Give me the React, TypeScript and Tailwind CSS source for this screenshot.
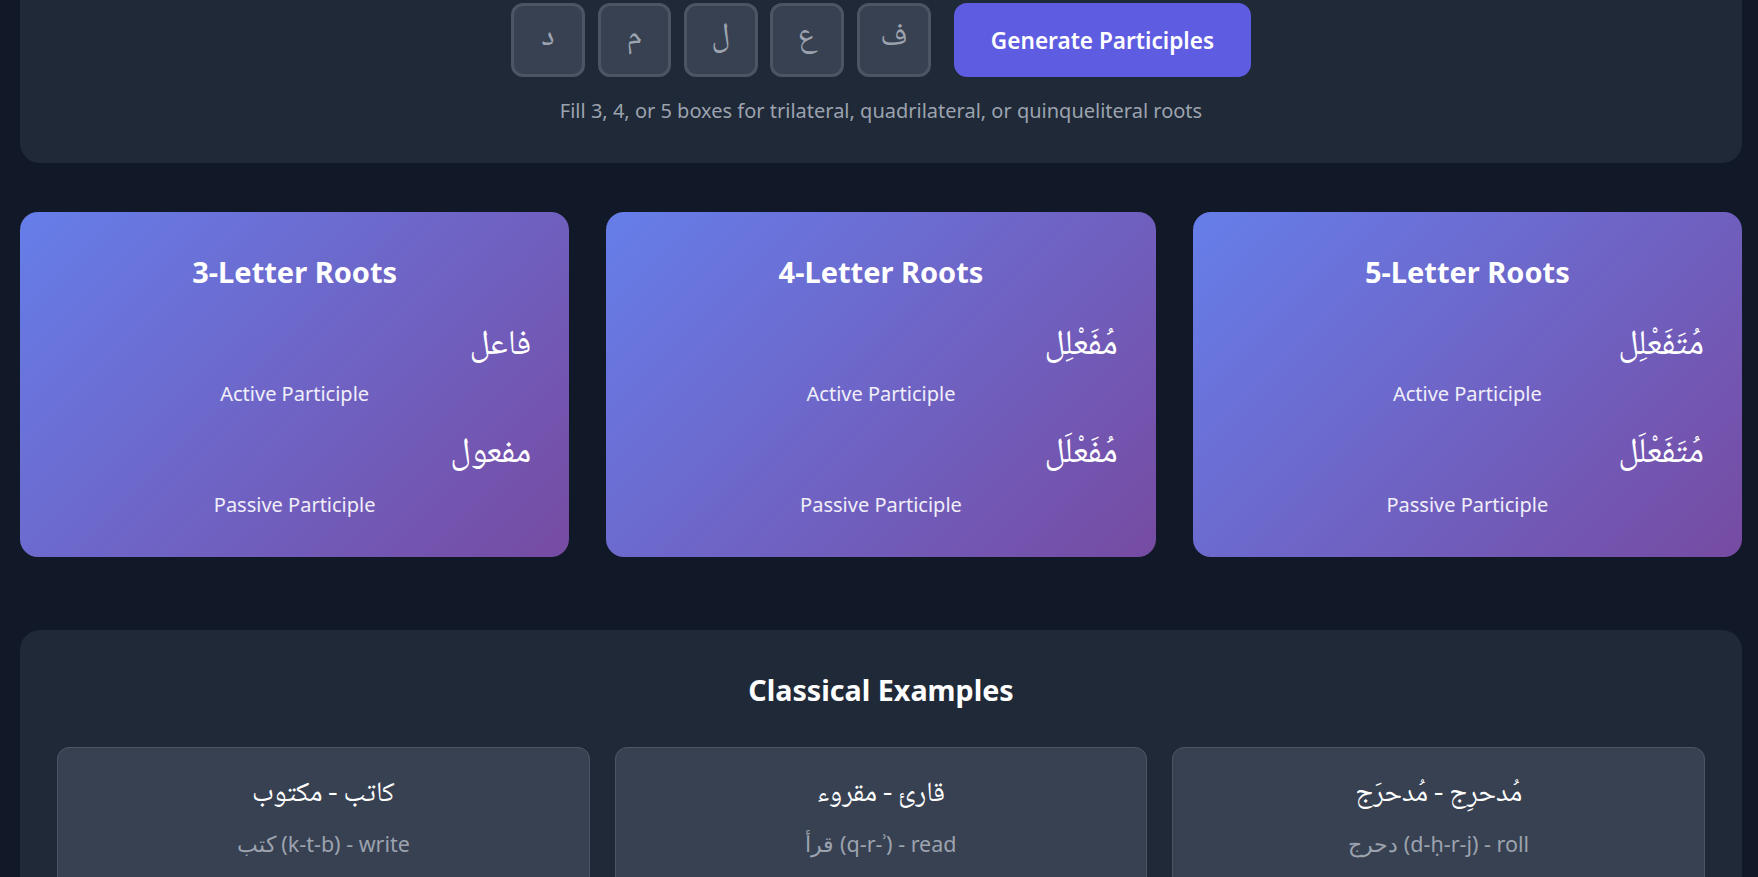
const boxes = ["د", "م", "ل", "ع", "ف"];

const rootCards = [
  { title: "3-Letter Roots", active: "فاعل", passive: "مفعول" },
  { title: "4-Letter Roots", active: "مُفَعْلِل", passive: "مُفَعْلَل" },
  { title: "5-Letter Roots", active: "مُتَفَعْلِل", passive: "مُتَفَعْلَل" },
];

const examples = [
  { arabic: "كاتب - مكتوب", root: "كتب (k-t-b) - write" },
  { arabic: "قارئ - مقروء", root: "قرأ (q-r-ʾ) - read" },
  { arabic: "مُدحرِج - مُدحرَج", root: "دحرج (d-ḥ-r-j) - roll" },
];

const arabicFont = "font-['Noto_Naskh_Arabic','Amiri','Scheherazade_New','Liberation_Serif',serif]";

export default function App() {
  return (
    <div className="h-[877px] overflow-hidden bg-[#111827] pl-5 pr-4 font-['Noto_Sans',sans-serif]">
      <section className="flex h-[163px] flex-col items-center rounded-b-[20px] bg-[#1f2937] pt-[3px]">
        <div className="flex items-center">
          <div className="flex gap-[12.9px]">
            {boxes.map((b) => (
              <div
                key={b}
                className={`flex h-[74px] w-[73.6px] items-center justify-center rounded-[12px] border-[3px] border-[#4b5563] bg-[#374151] pb-[4px] text-[32px] text-[#9ca3af] ${arabicFont}`}
              >
                {b}
              </div>
            ))}
          </div>
          <button className="ml-[23.4px] h-[74px] w-[297px] rounded-[13px] bg-[#5e5ce0] pt-[2px] text-[22.6px] font-semibold text-white">
            Generate Participles
          </button>
        </div>
        <p className="mt-[19px] text-[20px] leading-[30px] text-[#9ca3af]">
          Fill 3, 4, or 5 boxes for trilateral, quadrilateral, or quinqueliteral roots
        </p>
      </section>

      <div className="mt-[49px] grid h-[345px] grid-cols-3 gap-[37px]">
        {rootCards.map((c) => (
          <div
            key={c.title}
            className="rounded-[18px] bg-[linear-gradient(135deg,#667eea,#764ba2)] px-[38px] pt-[40px] text-center text-white"
          >
            <h3 className="text-[29px] leading-[40px] font-bold">{c.title}</h3>
            <div dir="rtl" className={`mt-[23px] h-[64px] text-right text-[35px] leading-[64px] ${arabicFont}`}>{c.active}</div>
            <div className="text-[20px] leading-[30px] text-white/90">Active Participle</div>
            <div dir="rtl" className={`mt-[12px] h-[69px] text-right text-[35px] leading-[68px] ${arabicFont}`}>{c.passive}</div>
            <div className="text-[20px] leading-[30px] text-white/90">Passive Participle</div>
          </div>
        ))}
      </div>

      <section className="mt-[73px] rounded-[20px] bg-[#1f2937] px-[37px] pt-[40px] pb-10">
        <h3 className="text-center text-[28.7px] leading-[40px] font-bold text-white">Classical Examples</h3>
        <div className="mt-[37px] grid grid-cols-3 gap-[25px]">
          {examples.map((e) => (
            <div key={e.root} className="h-[180px] rounded-[12px] border border-[#4b5563] bg-[#374151] pt-[25px] text-center">
              <div className={`text-[28px] leading-[44px] text-white ${arabicFont}`}>{e.arabic}</div>
              <div className="mt-[13px] text-[21.5px] leading-[28px] text-[#9ca3af]">{e.root}</div>
            </div>
          ))}
        </div>
      </section>
    </div>
  );
}
